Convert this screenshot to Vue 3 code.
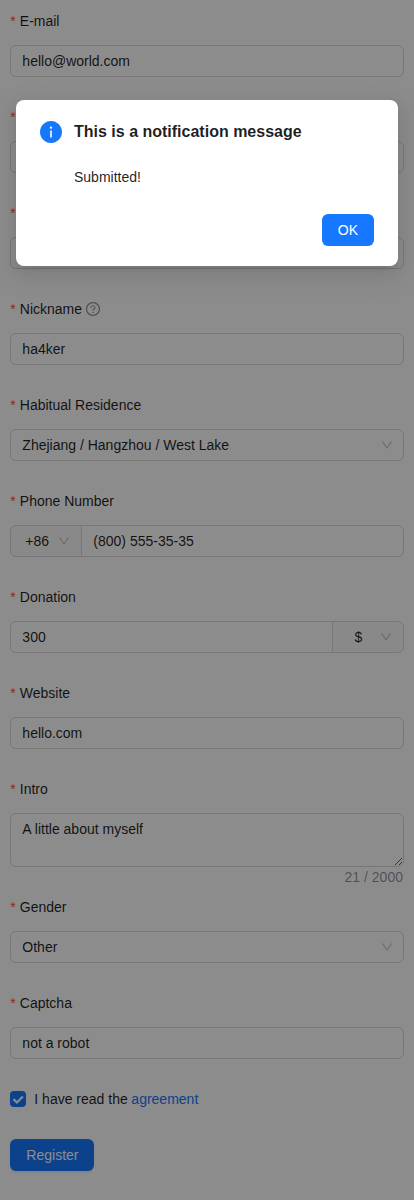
<script setup>
import { ref } from 'vue'

const fields = [
  { label: 'E-mail', value: 'hello@world.com', type: 'input' },
  { label: '', value: '', type: 'input' },
  { label: '', value: '', type: 'input' },
  { label: 'Nickname', value: 'ha4ker', type: 'input', help: true },
  { label: 'Habitual Residence', value: 'Zhejiang / Hangzhou / West Lake', type: 'select' },
  { label: 'Phone Number', value: '(800) 555-35-35', type: 'input', before: '+86' },
  { label: 'Donation', value: '300', type: 'input', after: '$' },
  { label: 'Website', value: 'hello.com', type: 'input' },
  { label: 'Intro', value: 'A little about myself', type: 'textarea', max: 2000 },
  { label: 'Gender', value: 'Other', type: 'select' },
  { label: 'Captcha', value: 'not a robot', type: 'input' },
]

const open = ref(true)

const downPath =
  'M884 256h-75c-5.1 0-9.9 2.5-12.9 6.6L512 654.2 227.9 262.6c-3-4.1-7.8-6.6-12.9-6.6h-75c-6.5 0-10.3 7.4-6.5 12.7l352.6 486.1c12.8 17.6 39 17.6 51.7 0l352.6-486.1c3.9-5.3.1-12.7-6.4-12.7z'
</script>

<template>
  <div class="page">
    <form class="form" @submit.prevent="open = true">
      <div v-for="(f, i) in fields" :key="i" class="item">
        <div class="label">
          <span class="star">*</span>
          <span>{{ f.label }}</span>
          <svg v-if="f.help" class="help" viewBox="64 64 896 896">
            <path d="M512 64C264.6 64 64 264.6 64 512s200.6 448 448 448 448-200.6 448-448S759.4 64 512 64zm0 820c-205.4 0-372-166.6-372-372s166.6-372 372-372 372 166.6 372 372-166.6 372-372 372z" />
            <path d="M623.6 316.7C593.6 290.4 554 276 512 276s-81.6 14.5-111.6 40.7C369.2 344 352 380.7 352 420v7.6c0 4.4 3.6 8 8 8h48c4.4 0 8-3.6 8-8V420c0-44.1 43.1-80 96-80s96 35.9 96 80c0 31.1-22 59.6-56.1 72.7-21.2 8.1-39.2 22.3-52.1 40.9-13.1 19-19.9 41.8-19.9 64.9V620c0 4.4 3.6 8 8 8h48c4.4 0 8-3.6 8-8v-22.7a48.3 48.3 0 0130.9-44.8c59-22.7 97.1-74.7 97.1-132.5.1-39.3-17.1-76-48.3-103.3zM472 732a40 40 0 1080 0 40 40 0 10-80 0z" />
          </svg>
        </div>

        <div v-if="f.type === 'textarea'" class="area-wrap">
          <textarea class="area" rows="2" :value="f.value"></textarea>
          <span class="count">{{ f.value.length }} / {{ f.max }}</span>
        </div>

        <div v-else class="control">
          <div v-if="f.before" class="addon before">
            <span>{{ f.before }}</span>
            <svg class="down" viewBox="64 64 896 896"><path :d="downPath" /></svg>
          </div>
          <div class="value">{{ f.value }}</div>
          <div v-if="f.after" class="addon after">
            <span>{{ f.after }}</span>
            <svg class="down" viewBox="64 64 896 896"><path :d="downPath" /></svg>
          </div>
          <svg v-if="f.type === 'select'" class="down arrow" viewBox="64 64 896 896"><path :d="downPath" /></svg>
        </div>
      </div>

      <label class="agree">
        <span class="box"><svg class="tick" viewBox="0 0 16 16"><path d="M3.5 8.1L6.9 11.5L12.9 5.4" /></svg></span>
        <span>I have read the <a class="link">agreement</a></span>
      </label>
      <button class="btn register" type="submit">Register</button>
    </form>

    <template v-if="open">
      <div class="mask"></div>
      <div class="modal" role="dialog">
        <div class="body">
          <svg class="info" viewBox="64 64 896 896">
            <path d="M512 64C264.6 64 64 264.6 64 512s200.6 448 448 448 448-200.6 448-448S759.4 64 512 64zm32 664c0 4.4-3.6 8-8 8h-48c-4.4 0-8-3.6-8-8V456c0-4.4 3.6-8 8-8h48c4.4 0 8 3.6 8 8v272zm-32-344a48.01 48.01 0 010-96 48.01 48.01 0 010 96z" />
          </svg>
          <div class="message">
            <div class="title">This is a notification message</div>
            <p class="text">Submitted!</p>
          </div>
        </div>
        <div class="actions">
          <button class="btn" type="button" @click="open = false">OK</button>
        </div>
      </div>
    </template>
  </div>
</template>

<style>
body {
  margin: 0;
  background: #fff;
}
</style>

<style scoped>
.page {
  position: relative;
  box-sizing: border-box;
  min-height: 1200px;
  padding: 5px 2.5% 0;
  font-family: "Liberation Sans", Arial, sans-serif;
  font-size: 14px;
  line-height: 22px;
  color: rgba(0, 0, 0, 0.88);
}
.form {
  display: flex;
  flex-direction: column;
  gap: 24px;
}
.label {
  display: flex;
  align-items: center;
  height: 32px;
  margin-bottom: 8px;
}
.star {
  margin-right: 4px;
  line-height: 14px;
  color: #ff4d4f;
}
.help {
  width: 14px;
  height: 14px;
  margin-left: 4px;
  fill: rgba(0, 0, 0, 0.45);
}
.control {
  display: flex;
  box-sizing: border-box;
  height: 32px;
  border: 1px solid #d9d9d9;
  border-radius: 6px;
}
.value {
  flex: 1;
  padding: 4px 11px;
}
.addon {
  display: flex;
  align-items: center;
  box-sizing: border-box;
  width: 71px;
  background: rgba(0, 0, 0, 0.02);
}
.before {
  padding-left: 14px;
  gap: 9px;
  border-right: 1px solid #d9d9d9;
  border-radius: 5px 0 0 5px;
}
.after {
  justify-content: flex-end;
  padding-right: 11px;
  gap: 17.3px;
  border-left: 1px solid #d9d9d9;
  border-radius: 0 5px 5px 0;
}
.down {
  width: 12px;
  height: 12px;
  fill: rgba(0, 0, 0, 0.25);
}
.arrow {
  margin: 9px 10px 0 0;
}
.area-wrap {
  position: relative;
  height: 54px;
}
.area {
  display: block;
  box-sizing: border-box;
  width: 100%;
  height: 54px;
  margin: 0;
  padding: 4px 11px;
  border: 1px solid #d9d9d9;
  border-radius: 6px;
  outline: none;
  background: #fff;
  font: inherit;
  color: inherit;
  resize: vertical;
}
.count {
  position: absolute;
  right: 0.7px;
  bottom: -21px;
  color: rgba(0, 0, 0, 0.45);
}
.agree {
  display: flex;
  align-items: center;
  gap: 8px;
  height: 32px;
}
.box {
  width: 16px;
  height: 16px;
  border-radius: 4px;
  background: #1677ff;
}
.tick {
  display: block;
  width: 16px;
  height: 16px;
  fill: none;
  stroke: #fff;
  stroke-width: 2.2;
}
.link {
  margin-left: -0.3px;
  color: #1677ff;
}
.btn {
  height: 32px;
  padding: 4px 15px;
  border: 1px solid transparent;
  border-radius: 6px;
  background: #1677ff;
  box-shadow: 0 2px 0 rgba(5, 145, 255, 0.1);
  font: inherit;
  color: #fff;
}
.register {
  align-self: flex-start;
}
.mask {
  position: absolute;
  inset: 0;
  background: rgba(0, 0, 0, 0.45);
}
.modal {
  position: absolute;
  top: 100px;
  left: 16px;
  right: 16px;
  box-sizing: border-box;
  padding: 20px 24px;
  border-radius: 8px;
  background: #fff;
  box-shadow: 0 6px 16px 0 rgba(0, 0, 0, 0.08), 0 3px 6px -4px rgba(0, 0, 0, 0.12),
    0 9px 28px 8px rgba(0, 0, 0, 0.05);
}
.body {
  display: flex;
  gap: 12px;
}
.info {
  width: 22px;
  height: 22px;
  margin-top: 1px;
  fill: #1677ff;
}
.title {
  font-size: 16px;
  font-weight: 600;
  line-height: 24px;
}
.text {
  margin: 22px 0 14px;
}
.actions {
  display: flex;
  justify-content: flex-end;
  margin-top: 12px;
}
.modal .btn {
  box-shadow: none;
}
</style>
